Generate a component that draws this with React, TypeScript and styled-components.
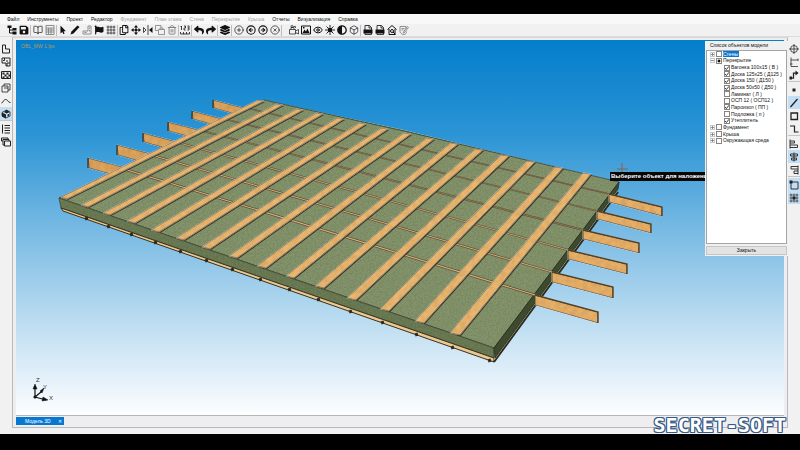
import React from "react";
import styled, { createGlobalStyle, css } from "styled-components";
import { BookOpen, Trash2, Box, CirclePlus, CircleArrowLeft, CircleArrowRight, CircleX, Eye } from "lucide-react";
import { FaSave, FaMousePointer, FaFlag, FaReply, FaShare, FaLayerGroup, FaRegCopy, FaArrowsAlt, FaAdjust } from "react-icons/fa";

const Global = createGlobalStyle`
  * { box-sizing: border-box; }
  body { margin: 0; background: #000; font-family: "Liberation Sans", sans-serif; }
  button { font: inherit; color: inherit; border: 0; padding: 0; background: none; }
`;

const Screen = styled.div`
  height: 100vh;
  padding: 14px 0 16px;
  background: #000;
  overflow: hidden;
  position: relative;
`;
const AppWindow = styled.div`
  height: 100%;
  display: flex;
  flex-direction: column;
  background: #f1f1f2;
  color: #111;
`;
const MenuBar = styled.nav`
  display: flex;
  gap: 8px;
  padding: 1px 7px 0;
  height: 10px;
  font-size: 5px;
  line-height: 9px;
  background: #f8f8f8;
`;
const MenuItem = styled.button`
  white-space: nowrap;
  &:disabled { color: #a2a2a2; }
`;
const ToolBar = styled.div`
  display: flex;
  align-items: center;
  height: 13px;
  padding: 0 6px;
  border-bottom: 1px solid #dcdcdc;
`;
const ToolButton = styled.button<{ $soft?: boolean }>`
  width: 12px;
  height: 12px;
  display: grid;
  place-items: center;
  color: ${(p) => (p.$soft ? "#777" : "#111")};
  svg { width: 10px; height: 10px; display: block; }
`;
const Divider = styled.i<{ $size: "thin" | "mid" | "wide" }>`
  width: ${(p) => ({ thin: 1, mid: 2, wide: 7 })[p.$size]}px;
  height: 11px;
  border-left: 1px solid #bdbdbd;
`;
const Body = styled.div`
  flex: 1;
  min-height: 0;
  display: flex;
`;
const SideBar = styled.div`
  width: 12px;
  padding-top: 5px;
  display: flex;
  flex-direction: column;
  align-items: center;
`;
const SideButton = styled.button<{ $active?: boolean }>`
  width: 12px;
  height: 13px;
  display: grid;
  place-items: center;
  color: #222;
  ${(p) => p.$active && css`background: #c4def3;`}
  svg { width: 10px; height: 10px; display: block; }
`;
const SideRule = styled.i`
  width: 12px;
  height: 2px;
  border-top: 1px solid #c4c4c4;
`;
const Frame = styled.main`
  flex: 1;
  min-width: 0;
  display: flex;
  flex-direction: column;
  margin-bottom: 6px;
  padding: 2px 3px 0;
  border: 1px solid #b9b9bd;
  border-top-color: #d6d6d6;
  background: #eeeef1;
`;
const Viewport = styled.section`
  flex: 1;
  min-height: 0;
  position: relative;
  border-bottom: 1px solid #b6b6bb;
  background: linear-gradient(#047ecb 0%, #2b94d5 25%, #7cbce4 52%, #c1dff2 77%, #fdfeff 100%);
`;
const SceneSvg = styled.svg`
  display: block;
  width: 100%;
  height: 100%;
`;
const ProjectName = styled.span`
  position: absolute;
  left: 5px;
  top: 3px;
  font-size: 5px;
  line-height: 7px;
  color: #b39a5e;
`;
const Hint = styled.div`
  position: absolute;
  left: 594px;
  top: 132px;
  padding: 0 1px;
  background: #060606;
  color: #fff;
  font-weight: bold;
  font-size: 6px;
  line-height: 9px;
  white-space: nowrap;
`;
const ObjectPanel = styled.aside`
  position: absolute;
  right: -4px;
  top: 1px;
  width: 83px;
  padding: 0 1px 1px;
  background: #f0f0f0;
  font-size: 5px;
  line-height: 7px;
`;
const PanelTitle = styled.h2`
  margin: 0;
  padding-left: 4px;
  font: inherit;
  line-height: 9px;
`;
const ListBox = styled.div`
  height: 194px;
  padding: 0 3px;
  border: 1px solid #a5a5a5;
  background: #fff;
`;
const Tree = styled.ul`
  margin: 0;
  padding: 0;
  height: 93px;
  list-style: none;
  display: flex;
  flex-direction: column;
`;
const TreeRow = styled.li<{ $child?: boolean }>`
  flex: 1;
  min-height: 0;
  display: flex;
  align-items: center;
  gap: 1px;
  padding-left: ${(p) => (p.$child ? 14 : 0)}px;
  white-space: nowrap;
`;
const Expander = styled.button`
  width: 5px;
  height: 5px;
  border: 1px solid #c9c9c9;
  display: grid;
  place-items: center;
  color: #777;
  svg { width: 3px; height: 3px; display: block; }
`;
const CheckLabel = styled.label<{ $selected?: boolean }>`
  display: flex;
  align-items: center;
  gap: 1px;
  span { ${(p) => p.$selected && css`background: #0a74d1; color: #fff; line-height: 6px; padding-right: 1px;`} }
`;
const tick = `url("data:image/svg+xml,%3Csvg xmlns='http://www.w3.org/2000/svg' viewBox='0 0 6 6'%3E%3Cpath d='M1 3l1.4 1.5L5 1.3' fill='none' stroke='%23222' stroke-width='.9'/%3E%3C/svg%3E")`;
const square = `url("data:image/svg+xml,%3Csvg xmlns='http://www.w3.org/2000/svg' viewBox='0 0 6 6'%3E%3Cpath d='M2 2h2v2H2z' fill='%23111' stroke='%23111' stroke-width='.6'/%3E%3C/svg%3E")`;
const CheckBox = styled.input<{ $mixed?: boolean }>`
  appearance: none;
  width: 6px;
  height: 6px;
  margin: 0;
  border: 1px solid #858585;
  background: #fff ${(p) => (p.$mixed ? square : "none")} center / 6px 6px no-repeat border-box;
  &:checked { background-image: ${tick}; }
`;
const CloseButton = styled.button`
  display: block;
  width: 100%;
  height: 9px;
  margin-top: 2px;
  border: 1px solid #c6c6c6;
  background: #e3e3e3;
  line-height: 7px;
`;
const TabStrip = styled.div`
  display: flex;
  height: 11px;
  padding-top: 1px;
`;
const Tab = styled.div`
  display: flex;
  align-items: center;
  gap: 7px;
  height: 8px;
  padding: 0 2px 0 9px;
  background: #0877d1;
  color: #fff;
  font-size: 5px;
  line-height: 8px;
`;
const Watermark = styled.div`
  position: absolute;
  right: 14px;
  bottom: 14px;
  font: bold 20px/22px "DejaVu Sans Mono", monospace;
  color: #fff;
  text-shadow: 1px 0 #375a86, -1px 0 #375a86, 0 1px #375a86, 0 -1px #375a86,
    1px 1px #375a86, -1px -1px #375a86, 1px -1px #375a86, -1px 1px #375a86;
`;

type IconProps = { d: string; fill?: boolean; w?: number; solid?: string };
/* Line icon on a 20-unit grid, with an optional solid part. */
const Glyph = ({ d, fill, w = 2, solid }: IconProps) => (
  <svg viewBox="0 0 20 20" fill={fill ? "currentColor" : "none"} stroke={fill ? "none" : "currentColor"} strokeWidth={w}>
    <path d={d} />
    {solid && <path d={solid} fill="currentColor" stroke="none" />}
  </svg>
);

const menus: [string, boolean?][] = [
  ["Файл"], ["Инструменты"], ["Проект"], ["Редактор"], ["Фундамент", true], ["План этажа", true],
  ["Стена", true], ["Перекрытие", true], ["Крыша", true], ["Отчеты"], ["Визуализация"], ["Справка"],
];

type Tool = { name: string; icon: React.ReactNode; soft?: boolean } | "thin" | "mid" | "wide";
const docIcon = <Glyph w={1.6} d="M4 10V1h9l4 4v5M4 16v3h13v-3M12 1v5h5" solid="M1 9h18v8H1z" />;
const tools: Tool[] = [
  { name: "Дерево проекта", icon: <Glyph d="M5 4v12h7M5 10h7" solid="M1 1h8v5H1zM11 6h8v5h-8zM11 13h8v6h-8z" /> },
  { name: "Сохранить", icon: <FaSave /> },
  "mid",
  { name: "Справочник", icon: <BookOpen strokeWidth={1.6} /> },
  { name: "Калькулятор", icon: <Glyph w={1.6} d="M2 1h16v18H2zM2 6h16M7 6v13M12 6v13M2 10h16M2 14h16" />, soft: true },
  "thin",
  { name: "Выбор", icon: <FaMousePointer viewBox="-60 -60 440 632" /> },
  { name: "Карандаш", icon: <Glyph fill d="M1 19l2-6L15 1l4 3L7 17z" /> },
  { name: "Угол", icon: <Glyph w={1.6} d="M12 2h6v16H2v-6h10zM15 5v3M15 10v3M9 15H5" />, soft: true },
  { name: "Флаг", icon: <FaFlag viewBox="-30 -30 572 572" /> },
  { name: "Сетка", icon: <Glyph w={1.3} d="M1 4h18M1 10h18M1 16h18M4 1v18M10 1v18M16 1v18" /> },
  "thin",
  { name: "Копировать", icon: <FaRegCopy /> },
  { name: "Переместить", icon: <Glyph d="M10 4v4M10 12v4M4 10h4M12 10h4" solid="M10 0l4 5H6zM10 20l4-5H6zM0 10l5-4v8zM20 10l-5-4v8zM8 8h4v4H8z" /> },
  { name: "Отразить", icon: <Glyph w={1.5} d="M10 0v20M1 5v10l5-5z" solid="M19 4v12l-7-6z" /> },
  { name: "Дублировать", icon: <Glyph w={1.5} d="M6 11H1V1h11v5M7 9h12v10H7zM10 9V6h6v3" />, soft: true },
  { name: "Удалить", icon: <Trash2 />, soft: true },
  "thin",
  { name: "Нумерация", icon: <Glyph w={1.6} d="M1 14v4h18v-4M7 14v4M13 14v4M3 2v8M1 4l2-2M8 2h3v4H8v4h3M15 2h3v8h-3M15 6h3" /> },
  "mid",
  { name: "Отменить", icon: <FaReply /> },
  { name: "Повторить", icon: <FaShare /> },
  "mid",
  { name: "Слои", icon: <FaLayerGroup /> },
  "mid",
  { name: "Добавить", icon: <CirclePlus strokeWidth={1.6} /> },
  { name: "Назад", icon: <CircleArrowLeft strokeWidth={2.6} /> },
  { name: "Вперед", icon: <CircleArrowRight strokeWidth={2.6} /> },
  { name: "Закрыть вид", icon: <CircleX strokeWidth={1.6} /> },
  "wide",
  { name: "Камера", icon: <Glyph w={1.4} d="M1 9h12v9H1zM13 12l6-3v9l-6-3M4 9V5h6v4M4 3a2 2 0 104 0 2 2 0 10-4 0M9 3h4v3" /> },
  { name: "Изображение", icon: <Glyph d="M1 2h18v16H1z" solid="M3 16l4-7 3 4 3-6 4 9zM4 4h3v3H4z" /> },
  { name: "Показать", icon: <Eye strokeWidth={2.4} /> },
  { name: "Солнце", icon: <Glyph w={1.8} d="M10 0v4M10 16v4M0 10h4M16 10h4M3 3l3 3M14 14l3 3M3 17l3-3M14 6l3-3" solid="M10 5a5 5 0 100 10 5 5 0 000-10" /> },
  { name: "Контраст", icon: <FaAdjust /> },
  { name: "Куб", icon: <Box strokeWidth={1.6} /> },
  "mid",
  { name: "Экспорт 1", icon: docIcon },
  { name: "Экспорт 2", icon: docIcon },
  { name: "Дом", icon: <Glyph w={2} d="M1 9l9-8 9 8M4 8v11h12V8M12 14l5 5M7 12a3 3 0 106 0 3 3 0 10-6 0" /> },
  { name: "Правка", icon: <Glyph w={1.6} d="M2 3h12v5M2 3v10c1 4 4 6 8 6 4-1 5-3 5-6M5 7h6M5 10h4M8 15L17 3l2 2-9 11z" />, soft: true },
];

type Side = { name: string; icon: React.ReactNode; active?: boolean } | "rule";
const leftTools: Side[] = [
  { name: "Контур", icon: <Glyph d="M3 2h6v8h8v8H3z" /> },
  { name: "Помещение", icon: <Glyph d="M2 2h16v10h-6v6M2 2v10h8v6h8v-6M7 2v5H4M10 8h4" /> },
  { name: "Кладка", icon: <Glyph d="M1 3h18v14H1z" solid="M3 5h4v4H3zM11 5h4v4h-4zM7 9h4v4H7zM15 9h3v4h-3zM3 13h4v3H3zM11 13h4v3h-4z" /> },
  { name: "Перекрытие", icon: <Glyph w={1.6} d="M6 6V2h12v12h-4M2 6h12v12H2zM6 10h8" /> },
  { name: "Кровля", icon: <Glyph d="M1 14c3 0 3-5 6-6 3-2 4-1 6 1 2 3 4 4 6 4" /> },
  { name: "Модель 3D", active: true, icon: <Glyph w={1.6} d="M2 7l9-5 7 4v8l-8 4-8-4z" solid="M2 7l8 4v8l-8-4zM11 2l7 4-7 3-5-3zM13 11l3-1v4l-3 1z" /> },
  "rule",
  { name: "Список", icon: <Glyph d="M7 3h11M7 8h11M7 13h11M7 18h11M3 1v18" /> },
  { name: "Окна", icon: <Glyph d="M4 8H1V2h13v3M7 16H4V5h12v3M7 8h12v10H7z" /> },
];
const rightTools: Side[] = [
  { name: "Центр", icon: <Glyph w={1.5} d="M10 0v20M0 10h20M3 10a7 7 0 1014 0 7 7 0 10-14 0" /> },
  { name: "Размеры", icon: <Glyph w={1.5} d="M4 1v18h14M4 6h14M18 3v5M2 14h5" /> },
  { name: "Путь", icon: <Glyph w={2.5} d="M3 16h6V6h8" solid="M13 1l6 5-6 5zM1 13h5v6H1z" /> },
  "rule",
  { name: "Точка", icon: <Glyph fill d="M7 7h6v6H7z" /> },
  { name: "Линия", active: true, icon: <Glyph w={2.5} d="M3 18L17 2" /> },
  { name: "Прямоугольник", icon: <Glyph w={2.6} d="M4 4h13v13H4z" /> },
  { name: "Ломаная", icon: <Glyph w={2.4} d="M2 4h9v12h8" /> },
  "rule",
  { name: "Влево", icon: <Glyph w={1.8} d="M2 1v18M2 4h9v4H2M2 12h15v5H2" /> },
  { name: "По центру", active: true, icon: <Glyph w={1.8} d="M10 1v18M3 4h14v4H3zM5 12h10v4H5z" /> },
  { name: "Вправо", icon: <Glyph w={1.8} d="M18 1v18M18 3H4v5h14M18 12h-8v5h8" /> },
  "rule",
  { name: "Привязка", active: true, icon: <Glyph w={1.8} d="M4 4h14v14H4z" solid="M1 1h6v6H1z" /> },
  { name: "Сетка привязки", active: true, icon: <Glyph w={1.3} d="M1 4h18M1 10h18M1 16h18M4 1v18M10 1v18M16 1v18" solid="M7 7h6v6H7z" /> },
];

type Node = { label: string; child?: boolean; checked?: boolean; mixed?: boolean; open?: boolean; selected?: boolean };
const nodes: Node[] = [
  { label: "Стены", selected: true },
  { label: "Перекрытие", mixed: true, open: true },
  { label: "Вагонка 100x15 ( В )", child: true, checked: true },
  { label: "Доска 125x25 ( Д125 )", child: true, checked: true },
  { label: "Доска 150 ( Д150 )", child: true, checked: true },
  { label: "Доска 50x50 ( Д50 )", child: true, checked: true },
  { label: "Ламинат ( Л )", child: true },
  { label: "ОСП 12 ( ОСП12 )", child: true },
  { label: "Пароизол ( ПП )", child: true, checked: true },
  { label: "Подложка ( п )", child: true },
  { label: "Утеплитель", child: true, checked: true },
  { label: "Фундамент" },
  { label: "Крыша" },
  { label: "Окружающая среда" },
];

/* Battens: front x, front y, front width, back right x, back right y. */
const battens = [
  [61, 198, 6, 264, 101], [81, 206, 7, 283, 105], [103, 214, 7, 303, 110], [127, 222, 8, 323, 114], [151, 231, 8, 344, 119],
  [176, 239, 8, 366, 124], [202, 248, 8, 388, 129], [229, 257, 8, 411, 134], [257, 267, 9, 434, 139], [286, 277, 8, 458, 144],
  [315, 287, 9, 483, 150], [347, 299, 9, 509, 156], [380, 310, 9, 535, 162], [415, 322, 9, 563, 168], [450, 334, 10, 591, 174],
];
/* Joists: left tip, exit point on the right side, right tip, depth. */
const joists = [
  [213, 100, 609, 194, 662, 207, 9], [192, 111, 597, 211, 651, 224, 9], [168, 122, 583, 230, 639, 243, 10],
  [143, 133, 568, 250, 627, 264, 10], [117, 145, 552, 272, 613, 287, 11], [88, 158, 535, 295, 598, 312, 11],
];
const posts = [[86, 217], [108, 225], [131, 233], [155, 241], [180, 250], [206, 259], [232, 268], [260, 278], [289, 288], [318, 298], [350, 310], [382, 321], [416, 333], [452, 346], [489, 359]];

const Scene = () => (
  <SceneSvg viewBox="16 40 768 375" role="img" aria-label="Модель перекрытия">
    <defs>
      <filter id="felt" x="0" y="0" width="100%" height="100%">
        <feTurbulence type="fractalNoise" baseFrequency=".6" numOctaves="3" seed="4" />
        <feColorMatrix values=".4 0 0 0 .62  .4 0 0 0 .62  .4 0 0 0 .6  0 0 0 0 1" />
        <feBlend in2="SourceGraphic" mode="multiply" />
        <feComposite in2="SourceGraphic" operator="in" />
      </filter>
      <filter id="grain" x="0" y="0" width="100%" height="100%">
        <feTurbulence type="fractalNoise" baseFrequency=".18" numOctaves="3" seed="9" />
        <feColorMatrix values=".3 0 0 0 .8  .35 0 0 0 .76  .4 0 0 0 .73  0 0 0 0 1" />
        <feBlend in2="SourceGraphic" mode="multiply" />
        <feComposite in2="SourceGraphic" operator="in" />
      </filter>
    </defs>
    <g stroke="#453722" strokeWidth=".8" fill="#dca45c" filter="url(#grain)">
      {joists.map(([x, y, , , , , h]) => (
        <path key={x} d={`M${x} ${y}l50 13v${h}l-49 -14z`} />
      ))}
    </g>
    <path d="M59 198L264 100L404 130L619 182L494 349z" fill="#8b9c72" filter="url(#felt)" />
    <path d="M59 198L264 100L404 131L619 182L494 348z" fill="none" stroke="#37402c" strokeWidth=".8" />
    <path d="M59 198L494 348V358L61 208z" fill="#71835a" filter="url(#felt)" />
    <path d="M59 198L494 348V358L61 208z" fill="none" stroke="#333b28" strokeWidth=".8" />
    <path d="M61 208L494 358V362L63 211z" fill="#e9c990" stroke="#39301f" strokeWidth="1" />
    <path d="M494 362L618 192" stroke="#2b2a20" strokeWidth="2" />
    <path d="M494 360L617 191" stroke="#d7b27a" strokeWidth=".8" />
    <path d="M494 348L619 182L618 189L495 358z" fill="#3d4a2d" stroke="#25291b" strokeWidth=".8" />
    {posts.map(([x, y]) => (
      <path key={x} d={`M${x} ${y}l1 3`} stroke="#30281b" strokeWidth="3" />
    ))}
    {joists.map(([x, y, rx, ry], i) => (
      <g key={x}>
        <path d={`M${x} ${y}L${rx} ${ry}`} stroke="#5e4d36" strokeWidth={1.4 + i * 0.22} strokeDasharray={`0 ${30 + i * 2} 900`} />
        <path d={`M${x} ${y}L${rx} ${ry}`} stroke={i < 3 ? "#a48962" : "#d5b27c"} strokeWidth={0.4 + i * 0.14} strokeDasharray={`0 ${30 + i * 2} 900`} />
      </g>
    ))}
    <g fill="#3a3421">
      {battens.map(([x, y, w, bx, by]) => (
        <path key={x} d={`M${x + 2} ${y}l${w - 1} 2L${bx + 1} ${by + 1}l-6 -1z`} />
      ))}
    </g>
    <g stroke="#4b3b24" strokeWidth=".6" fill="#e9b76f" filter="url(#grain)">
      {battens.map(([x, y, w, bx, by], i) => (
        <path key={x} d={`M${x} ${y - 1}l${w} 2L${bx} ${by}l${-6 - i / 7} -1z`} />
      ))}
    </g>
    <g stroke="#453722" strokeWidth=".8" fill="#e6b068" filter="url(#grain)">
      {joists.map(([x, , rx, ry, ex, ey, h]) => (
        <path key={x} d={`M${rx} ${ry}L${ex} ${ey}v${h}L${rx} ${ry + h - 1}z`} />
      ))}
    </g>
    {joists.map(([x, , rx, ry, ex, ey, h]) => (
      <path key={x} d={`M${rx} ${ry}L${ex} ${ey}v${h}`} fill="none" stroke="#51412a" strokeWidth="1.4" />
    ))}
    {joists.map(([x, y, , , , , h]) => (
      <path key={x} d={`M${x} ${y}v${h - 1}`} stroke="#3b3020" strokeWidth="1.3" />
    ))}
    <path d="M617 169h11M622 163v11" stroke="#8a6248" strokeWidth="1" />
    <g stroke="#111" strokeWidth="1.2" fill="#111">
      <path d="M35 397V386M35 397L41 392M35 397L46 400" />
      <path d="M33 389l2-5 2 5zM40 391l4-3-2 5zM43 397l5 3-6 1z" strokeWidth=".5" />
      <circle cx="35" cy="397" r="1" />
    </g>
    <g fontFamily="Liberation Sans, sans-serif" fontSize="6" fill="#333">
      <text x="36" y="382">Z</text>
      <text x="43" y="389">Y</text>
      <text x="49" y="400">X</text>
    </g>
  </SceneSvg>
);

const SideTools = ({ items }: { items: Side[] }) => (
  <SideBar>
    {items.map((t, i) =>
      t === "rule" ? <SideRule key={i} /> : (
        <SideButton key={i} aria-label={t.name} $active={t.active}>{t.icon}</SideButton>
      )
    )}
  </SideBar>
);

export default function App() {
  return (
    <Screen>
      <Global />
      <AppWindow>
        <MenuBar>
          {menus.map(([label, off]) => <MenuItem key={label} disabled={off}>{label}</MenuItem>)}
        </MenuBar>
        <ToolBar>
          {tools.map((t, i) =>
            typeof t === "string" ? <Divider key={i} $size={t} /> : (
              <ToolButton key={i} aria-label={t.name} $soft={t.soft}>{t.icon}</ToolButton>
            )
          )}
        </ToolBar>
        <Body>
          <SideTools items={leftTools} />
          <Frame>
            <Viewport>
              <Scene />
              <ProjectName>OBL_MW 1.lps</ProjectName>
              <Hint>Выберите объект для наложения</Hint>
              <ObjectPanel>
                <PanelTitle>Список объектов модели</PanelTitle>
                <ListBox>
                  <Tree>
                    {nodes.map((n) => (
                      <TreeRow key={n.label} $child={n.child}>
                        {!n.child && (
                          <Expander aria-label={n.open ? "Свернуть" : "Развернуть"}>
                            <svg viewBox="0 0 3 3" stroke="currentColor" strokeWidth=".8"><path d={n.open ? "M0 1.5h3" : "M0 1.5h3M1.5 0v3"} /></svg>
                          </Expander>
                        )}
                        <CheckLabel $selected={n.selected}>
                          <CheckBox type="checkbox" defaultChecked={n.checked} $mixed={n.mixed} />
                          <span>{n.label}</span>
                        </CheckLabel>
                      </TreeRow>
                    ))}
                  </Tree>
                </ListBox>
                <CloseButton>Закрыть</CloseButton>
              </ObjectPanel>
            </Viewport>
            <TabStrip>
              <Tab>Модель 3D<button aria-label="Закрыть вкладку">✕</button></Tab>
            </TabStrip>
          </Frame>
          <SideTools items={rightTools} />
        </Body>
      </AppWindow>
      <Watermark>SECRET-SOFT</Watermark>
    </Screen>
  );
}
